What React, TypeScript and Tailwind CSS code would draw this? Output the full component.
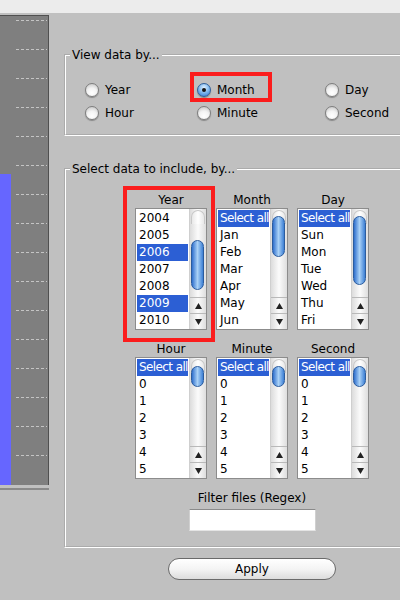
import React from "react";

function Radio({ label, checked }: { label: string; checked?: boolean }) {
  return (
    <div className="flex items-center gap-[6px] h-[18px]">
      <span
        className={`w-[14px] h-[14px] rounded-full border flex items-center justify-center shadow-[0_1px_1px_rgba(0,0,0,0.3)] ${
          checked
            ? "border-[#2f5f9a] bg-[radial-gradient(circle_at_50%_30%,#e2f1ff_0%,#86bdf0_45%,#2d74cf_100%)]"
            : "border-[#7e7e7e] bg-[radial-gradient(circle_at_50%_75%,#ffffff_0%,#f3f3f3_45%,#bdbdbd_100%)]"
        }`}
      >
        {checked && <span className="w-[4px] h-[4px] rounded-full bg-[#151515]" />}
      </span>
      <span>{label}</span>
    </div>
  );
}

function Scrollbar({ top, height }: { top: number; height: number }) {
  return (
    <div className="w-[17px] flex flex-col border-l border-[#cfcfcf] bg-gradient-to-r from-[#dcdcdc] via-[#fbfbfb] to-[#dedede]">
      <div className="relative flex-1">
        <div className="absolute left-[1px] right-[1px] top-[1px] h-[14px] rounded-t-full bg-gradient-to-r from-[#e8e8e8] via-white to-[#e8e8e8] border border-b-0 border-[#c8c8c8]" />
        <div
          className="absolute left-[1px] right-[2px] rounded-full border border-[#2b5c9e] bg-gradient-to-r from-[#2f6fcc] via-[#a9d1f6] to-[#3c7fd4]"
          style={{ top, height }}
        />
      </div>
      <div className="h-[16px] border-t border-[#b9b9b9] flex items-center justify-center">
        <svg width="7" height="6" viewBox="0 0 7 6">
          <polygon points="3.5,0 7,6 0,6" fill="#222" />
        </svg>
      </div>
      <div className="h-[16px] border-t border-[#b9b9b9] flex items-center justify-center">
        <svg width="7" height="6" viewBox="0 0 7 6">
          <polygon points="0,0 7,0 3.5,6" fill="#222" />
        </svg>
      </div>
    </div>
  );
}

function ListBox({
  title,
  items,
  selected,
  thumbTop,
  thumbH,
}: {
  title: string;
  items: string[];
  selected: number[];
  thumbTop: number;
  thumbH: number;
}) {
  return (
    <div className="flex flex-col w-[72px]">
      <div className="h-[16px] leading-[16px] text-center">{title}</div>
      <div className="flex h-[122px] border border-[#8c8c8c] bg-white">
        <div className="flex-1 overflow-hidden p-px">
          {items.map((it, i) => (
            <div
              key={it}
              className={`h-[17px] leading-[17px] pl-[2px] whitespace-nowrap ${
                it === "Select all" ? "tracking-[-0.6px]" : ""
              } ${selected.includes(i) ? "bg-[#2c5fd4] text-white" : "text-black"}`}
            >
              {it}
            </div>
          ))}
        </div>
        <Scrollbar top={thumbTop} height={thumbH} />
      </div>
    </div>
  );
}

function Chart() {
  const dashes = Array.from({ length: 16 }, (_, k) => 4 + k * 29);
  return (
    <div className="flex flex-col w-[49px] mt-[2px]">
      <div className="h-[470px] border-t border-r border-[#505050] bg-[#7f7f7f]">
        <svg width="48" height="469" viewBox="0 0 48 469">
          <rect x="0" y="158" width="11" height="311" fill="#6666ff" />
          {dashes.map((y) => (
            <line key={y} x1="16" y1={y + 0.5} x2="47" y2={y + 0.5} stroke="#c4c4c4" strokeDasharray="3 2" />
          ))}
        </svg>
      </div>
      <div className="mt-[3px] h-[2px] bg-[#8a8a8a]" />
    </div>
  );
}

const nums = ["Select all", "0", "1", "2", "3", "4", "5"];

export default function App() {
  return (
    <div className="w-[400px] h-[600px] overflow-hidden bg-[#c0c0c0] text-[12px] text-black font-['DejaVu_Sans',sans-serif]">
      <div className="h-[13px] bg-[#ececec]" />
      <div className="flex">
        <Chart />
        <div className="ml-[15px] w-[376px] shrink-0 flex flex-col">
          {/* View data by */}
          <fieldset className="mt-[35px] border-2 [border-style:groove] border-white pb-[12px]">
            <legend className="ml-[4px] px-[2px] leading-[14px]">View data by...</legend>
            <div className="grid grid-cols-[112px_128px_1fr] gap-y-[5px] pl-[19px] pt-[19px]">
              <Radio label="Year" />
              <div className="relative">
                <Radio label="Month" checked />
                <div className="absolute -left-[7px] -top-[9px] w-[82px] h-[30px] border-4 border-[#fb1d1d]" />
              </div>
              <Radio label="Day" />
              <Radio label="Hour" />
              <Radio label="Minute" />
              <Radio label="Second" />
            </div>
          </fieldset>

          {/* Select data */}
          <fieldset className="mt-[26px] border-2 [border-style:groove] border-white pb-[15px]">
            <legend className="ml-[4px] px-[2px] leading-[14px]">Select data to include, by...</legend>
            <div className="flex flex-col items-center pt-[16px]">
              <div className="grid grid-cols-[72px_72px_72px] gap-x-[9px] gap-y-[11px]">
                <div className="relative">
                  <ListBox
                    title="Year"
                    items={["2004", "2005", "2006", "2007", "2008", "2009", "2010"]}
                    selected={[2, 5]}
                    thumbTop={31}
                    thumbH={50}
                  />
                  <div className="absolute -left-[12px] -top-[6px] w-[92px] h-[156px] border-4 border-[#fb1d1d]" />
                </div>
                <ListBox
                  title="Month"
                  items={["Select all", "Jan", "Feb", "Mar", "Apr", "May", "Jun"]}
                  selected={[0]}
                  thumbTop={7}
                  thumbH={41}
                />
                <ListBox
                  title="Day"
                  items={["Select all", "Sun", "Mon", "Tue", "Wed", "Thu", "Fri"]}
                  selected={[0]}
                  thumbTop={7}
                  thumbH={69}
                />
                <ListBox title="Hour" items={nums} selected={[0]} thumbTop={8} thumbH={21} />
                <ListBox title="Minute" items={nums} selected={[0]} thumbTop={8} thumbH={21} />
                <ListBox title="Second" items={nums} selected={[0]} thumbTop={8} thumbH={21} />
              </div>
              <div className="mt-[11px] h-[16px] leading-[16px]">Filter files (Regex)</div>
              <div className="mt-[3px] w-[127px] h-[22px] bg-white border-t border-[#8a8a8a] border-x border-b border-x-[#d0d0d0] border-b-[#e4e4e4]" />
            </div>
          </fieldset>

          <button className="mt-[10px] mx-auto w-[168px] h-[22px] rounded-full border border-[#6a6a6a] bg-gradient-to-b from-white via-[#f4f4f4] to-[#dcdcdc] leading-[20px] text-center">
            Apply
          </button>
        </div>
      </div>
    </div>
  );
}
